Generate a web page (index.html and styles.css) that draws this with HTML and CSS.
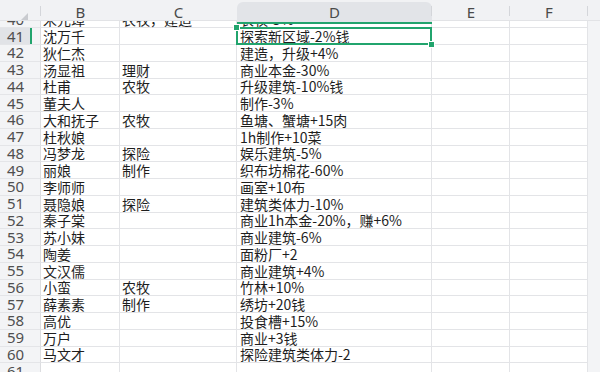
FILE: index.html
```html
<!DOCTYPE html>
<html lang="zh">
<head>
<meta charset="utf-8">
<link rel="stylesheet" href="styles.css">
</head>
<body>
<div class="sheet">
  <div class="colhead">
    <div class="hc corner"><span class="tri"></span></div>
    <div class="hc sep">B</div>
    <div class="hc">C</div>
    <div class="hc sel">D</div>
    <div class="hc sep">E</div>
    <div class="hc sep">F</div>
    <div class="hc rest"></div>
  </div>
  <div class="viewport">
    <div class="grid">
      <div class="rh">40</div><div class="c">宋元璋</div><div class="c">农牧，建造</div><div class="c">农牧-5%</div><div class="c"></div><div class="c"></div><div class="gap"></div>
      <div class="rh rsel">41</div><div class="c">沈万千</div><div class="c"></div><div class="c active">探索新区域-2%钱<span class="h tl"></span><span class="h br"></span></div><div class="c"></div><div class="c"></div><div class="gap"></div>
      <div class="rh">42</div><div class="c">狄仁杰</div><div class="c"></div><div class="c">建造，升级+4%</div><div class="c"></div><div class="c"></div><div class="gap"></div>
      <div class="rh">43</div><div class="c">汤显祖</div><div class="c">理财</div><div class="c">商业本金-30%</div><div class="c"></div><div class="c"></div><div class="gap"></div>
      <div class="rh">44</div><div class="c">杜甫</div><div class="c">农牧</div><div class="c">升级建筑-10%钱</div><div class="c"></div><div class="c"></div><div class="gap"></div>
      <div class="rh">45</div><div class="c">董夫人</div><div class="c"></div><div class="c">制作-3%</div><div class="c"></div><div class="c"></div><div class="gap"></div>
      <div class="rh">46</div><div class="c">大和抚子</div><div class="c">农牧</div><div class="c">鱼塘、蟹塘+15肉</div><div class="c"></div><div class="c"></div><div class="gap"></div>
      <div class="rh">47</div><div class="c">杜秋娘</div><div class="c"></div><div class="c">1h制作+10菜</div><div class="c"></div><div class="c"></div><div class="gap"></div>
      <div class="rh">48</div><div class="c">冯梦龙</div><div class="c">探险</div><div class="c">娱乐建筑-5%</div><div class="c"></div><div class="c"></div><div class="gap"></div>
      <div class="rh">49</div><div class="c">丽娘</div><div class="c">制作</div><div class="c">织布坊棉花-60%</div><div class="c"></div><div class="c"></div><div class="gap"></div>
      <div class="rh">50</div><div class="c">李师师</div><div class="c"></div><div class="c">画室+10布</div><div class="c"></div><div class="c"></div><div class="gap"></div>
      <div class="rh">51</div><div class="c">聂隐娘</div><div class="c">探险</div><div class="c">建筑类体力-10%</div><div class="c"></div><div class="c"></div><div class="gap"></div>
      <div class="rh">52</div><div class="c">秦子棠</div><div class="c"></div><div class="c">商业1h本金-20%，赚+6%</div><div class="c"></div><div class="c"></div><div class="gap"></div>
      <div class="rh">53</div><div class="c">苏小妹</div><div class="c"></div><div class="c">商业建筑-6%</div><div class="c"></div><div class="c"></div><div class="gap"></div>
      <div class="rh">54</div><div class="c">陶姜</div><div class="c"></div><div class="c">面粉厂+2</div><div class="c"></div><div class="c"></div><div class="gap"></div>
      <div class="rh">55</div><div class="c">文汉儒</div><div class="c"></div><div class="c">商业建筑+4%</div><div class="c"></div><div class="c"></div><div class="gap"></div>
      <div class="rh">56</div><div class="c">小蛮</div><div class="c">农牧</div><div class="c">竹林+10%</div><div class="c"></div><div class="c"></div><div class="gap"></div>
      <div class="rh">57</div><div class="c">薛素素</div><div class="c">制作</div><div class="c">绣坊+20钱</div><div class="c"></div><div class="c"></div><div class="gap"></div>
      <div class="rh">58</div><div class="c">高优</div><div class="c"></div><div class="c">投食槽+15%</div><div class="c"></div><div class="c"></div><div class="gap"></div>
      <div class="rh">59</div><div class="c">万户</div><div class="c"></div><div class="c">商业+3钱</div><div class="c"></div><div class="c"></div><div class="gap"></div>
      <div class="rh">60</div><div class="c">马文才</div><div class="c"></div><div class="c">探险建筑类体力-2</div><div class="c"></div><div class="c"></div><div class="gap"></div>
      <div class="rh">61</div><div class="c"></div><div class="c"></div><div class="c"></div><div class="c"></div><div class="c"></div><div class="gap"></div>
    </div>
  </div>
</div>
</body>
</html>
```

FILE: styles.css
```css
* { box-sizing: border-box; }
html, body { margin: 0; padding: 0; }
body {
  width: 600px;
  height: 372px;
  overflow: hidden;
  background: #f3f4f6;
  font-family: "Noto Sans", "Noto Sans CJK SC", sans-serif;
}
.sheet {
  display: flex;
  flex-direction: column;
  height: 372px;
}
.colhead {
  display: grid;
  grid-template-columns: 41px 79px 117px 195px 78px 78px 12px;
  height: 21px;
  background: #f1f2f4;
  border-bottom: 1px solid #e2e3e6;
  flex: none;
  position: relative;
  z-index: 3;
}
.hc {
  position: relative;
  display: flex;
  align-items: center;
  justify-content: center;
  font-size: 15px;
  color: #4a4a4a;
  padding-top: 1px;
}
.hc.sep::before,
.hc.rest::before {
  content: "";
  position: absolute;
  left: -1px;
  top: 6px;
  height: 10px;
  border-left: 1px solid #d4d6da;
}
.hc.sel {
  background: #e2e4e8;
  border-radius: 6px 6px 0 0;
  margin-top: 2px;
  border-bottom: 2px solid #21a46d;
  margin-bottom: -1px;
  padding-top: 0;
}
.corner {
  justify-content: flex-end;
  align-items: flex-end;
  padding: 0 13px 3px 0;
}
.tri {
  width: 0;
  height: 0;
  border-left: 7px solid transparent;
  border-bottom: 7px solid #c9cbcf;
}
.viewport {
  flex: 1;
  overflow: hidden;
}
.grid {
  display: grid;
  grid-template-columns: 41px 79px 117px 195px 78px 78px 12px;
  grid-auto-rows: 16.75px;
  margin-top: -9.5px;
}
.rh {
  background: #f3f4f6;
  border-right: 1px solid #dcdde0;
  border-bottom: 1px solid #e4e5e8;
  font-size: 15px;
  color: #4f4f4f;
  display: flex;
  align-items: center;
  padding-left: 7px;
  line-height: 1;
}
.rh.rsel {
  background: linear-gradient(to right, #e1e3e7 0 30px, #21a46d 30px 32px, #f3f4f6 32px);
}
.c {
  background: #fff;
  border-right: 1px solid #e3e4e7;
  border-bottom: 1px solid #e3e4e7;
  font-size: 14px;
  color: #1e1e1e;
  display: flex;
  align-items: center;
  padding-left: 2px;
  white-space: nowrap;
  line-height: 1;
  font-family: "Noto Sans CJK SC", "Noto Sans", sans-serif;
}
.c:nth-child(7n+4) { padding-left: 3px; }
.gap {
  background: #f3f4f6;
}
.active {
  position: relative;
}
.active::after {
  content: "";
  position: absolute;
  left: -1px;
  top: -1px;
  right: -1px;
  bottom: -1px;
  border: 2px solid #21a46d;
}
.h {
  position: absolute;
  width: 7px;
  height: 7px;
  background: #21a46d;
  border: 1px solid #fff;
  z-index: 2;
}
.h.tl { left: -4px; top: -4px; }
.h.br { right: -4px; bottom: -4px; }
```
